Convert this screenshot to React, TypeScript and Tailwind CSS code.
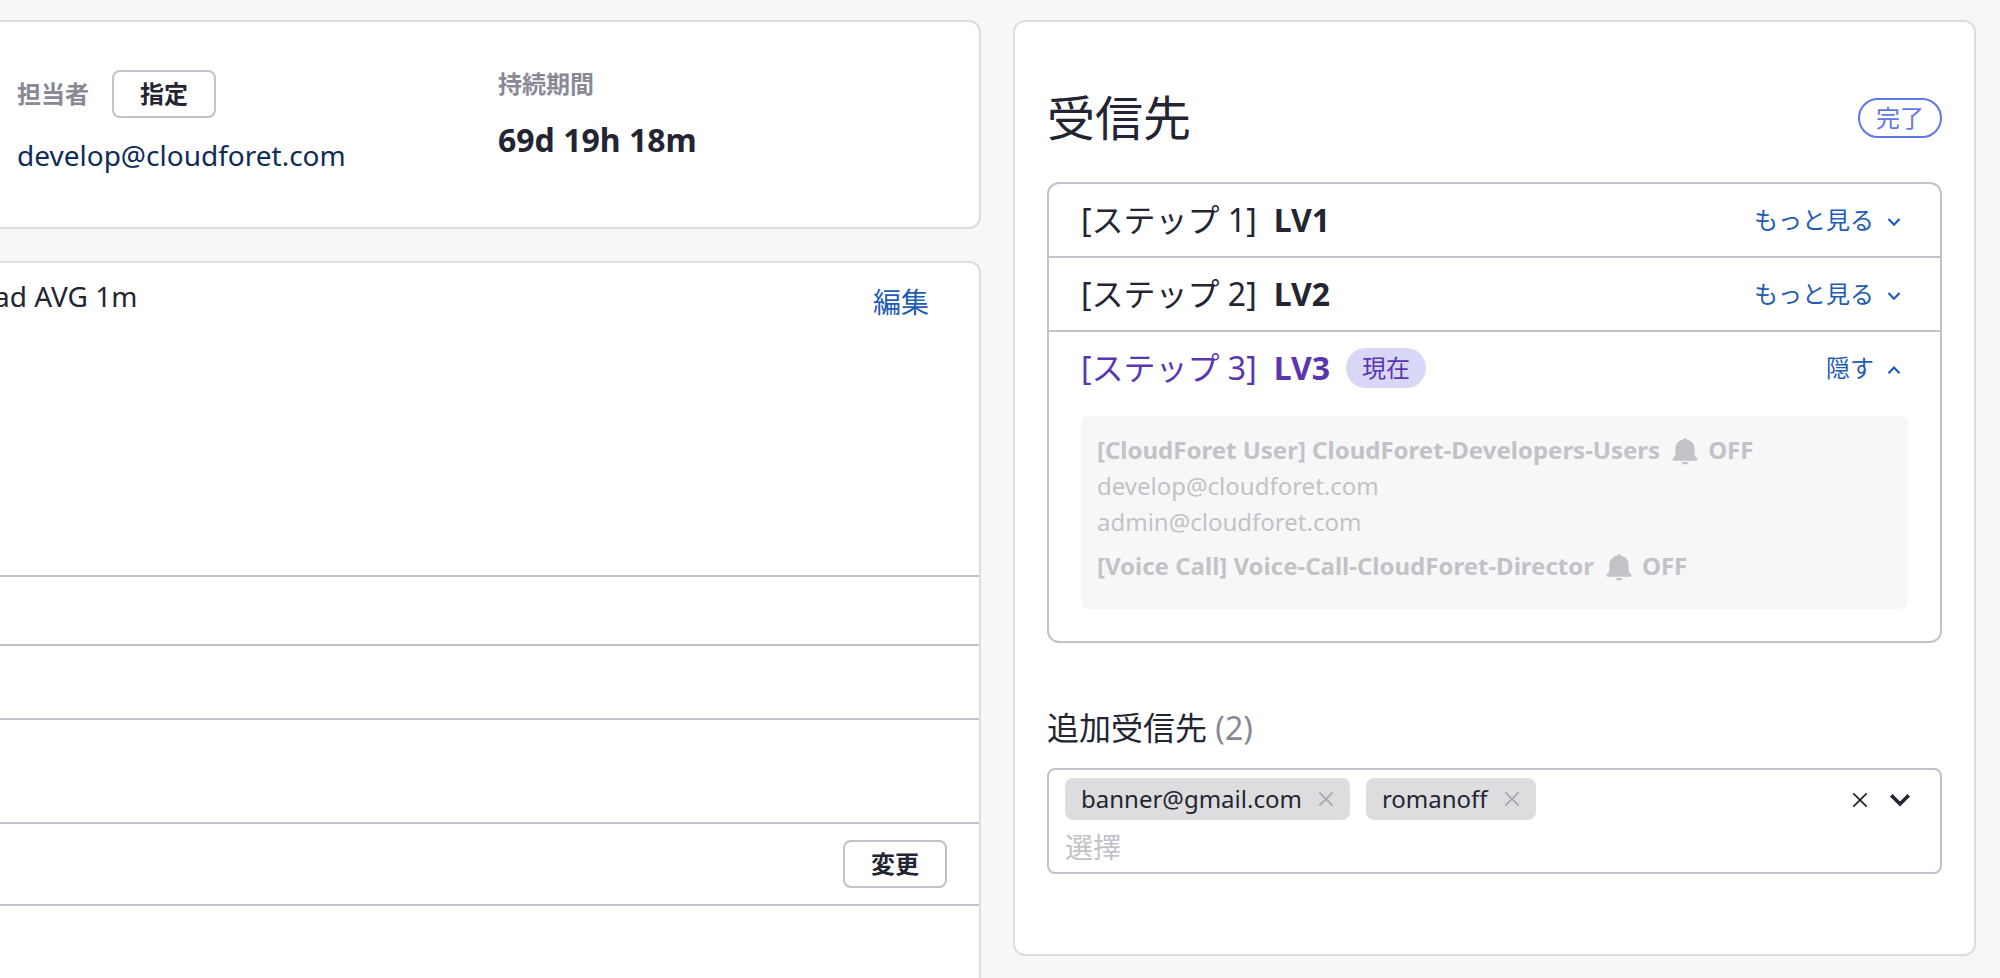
import { useState } from "react";

function Chevron({ up = false }: { up?: boolean }) {
  return (
    <svg viewBox="0 0 24 24" className="size-6" fill="none" stroke="currentColor" strokeWidth="2.2" aria-hidden="true">
      <path d={up ? "M6.5 17.200 12 11.500l5.500 5.700" : "M6.500 11l5.500 5.700 5.500-5.700"} />
    </svg>
  );
}

function Bell() {
  return (
    <svg viewBox="0 0 26 28" className="mt-0.5 mr-2.5 ml-3 h-7 w-[26px]" fill="currentColor" aria-hidden="true">
      <path d="M13 1.300c-1.300 0-1.900.7-2.200 1.500C6.400 3.600 3.400 7.100 3.400 11.600v7L.9 21.300c-.9 1.300-.4 2.400 1.100 2.400h22c1.500 0 2-1.100 1.100-2.400L22.600 18.600v-7c0-4.500-3-8-7.400-8.800C14.900 2 14.300 1.300 13 1.300zM9.300 25h7.400c-.6 1.600-2 2.400-3.700 2.400S9.900 26.600 9.300 25z" />
    </svg>
  );
}

function Cross() {
  return (
    <svg viewBox="0 0 16 16" className="size-4" fill="none" stroke="currentColor" strokeWidth="1.8" aria-hidden="true">
      <path d="M1.300 1.300l13.400 13.400M14.700 1.300L1.300 14.700" />
    </svg>
  );
}

function OutlineButton({ children }: { children: string }) {
  return (
    <button type="button" className="flex h-12 w-26 items-center justify-center rounded-lg border-2 border-[#c2c2c8] bg-white text-2xl font-bold">
      {children}
    </button>
  );
}

function StepHeader({ step, current = false }: { step: number; current?: boolean }) {
  return (
    <div className="flex h-18 items-center justify-between px-8">
      <h3 className={current ? "flex items-center text-[32px] text-[#5a37b0]" : "flex items-center text-[32px]"}>
        <span>[ステップ {step}]</span>
        <strong className="ml-[17px] font-bold">LV{step}</strong>
        {current && <span className="ml-4 flex h-10 items-center rounded-full bg-[#d9d7f7] px-4 text-2xl">現在</span>}
      </h3>
      <button type="button" aria-expanded={current} className="flex items-center gap-2 text-2xl text-[#1f5cb3]">
        {current ? "隠す" : "もっと見る"}
        <span className="pr-0.5">
          <Chevron up={current} />
        </span>
      </button>
    </div>
  );
}

function Channel({ name, members = [] }: { name: string; members?: string[] }) {
  return (
    <section className="mb-2">
      <h4 className="flex items-center font-bold">
        {name}
        <Bell />
        OFF
      </h4>
      {members.map((member) => (
        <p key={member}>{member}</p>
      ))}
    </section>
  );
}

export default function App() {
  const [tags, setTags] = useState(["banner@gmail.com", "romanoff"]);

  return (
    <main
      lang="ja"
      className="grid min-h-screen grid-cols-[981fr_963fr] gap-8 bg-[#f7f7f7] pt-5 pr-6 font-['Noto_Sans','Noto_Sans_CJK_JP',sans-serif] text-[#232533]"
    >
      <div className="flex min-w-0 flex-col gap-8">
        <section className="grid grid-cols-2 rounded-r-xl border-2 border-l-0 border-[#dddddf] bg-white pt-12 pb-[52px] pl-[17px]">
          <div>
            <div className="flex items-center gap-[23px]">
              <h2 className="text-2xl font-bold text-[#898995]">担当者</h2>
              <OutlineButton>指定</OutlineButton>
            </div>
            <p className="mt-[17px] text-[28px] leading-10 text-[#0f2c59]">develop@cloudforet.com</p>
          </div>
          <div>
            <h2 className="text-2xl leading-7 font-bold text-[#898995]">持続期間</h2>
            <p className="mt-[18px] text-[32px] leading-12 font-bold">69d 19h 18m</p>
          </div>
        </section>

        <section className="grow rounded-tr-xl border-t-2 border-r-2 border-[#dddddf] bg-white">
          <div className="flex h-78 items-start justify-between pt-[11px] pr-[50px] text-[28px] leading-11">
            <p className="-ml-1.5">ad AVG 1m</p>
            <a href="#edit" className="mt-1.5 text-[#1f5cb3]">
              編集
            </a>
          </div>
          <div className="h-[69px] border-t-2 border-[#c2c2c8]" />
          <div className="h-[74px] border-t-2 border-[#c2c2c8]" />
          <div className="h-26 border-t-2 border-[#c2c2c8]" />
          <div className="flex justify-end border-y-2 border-[#c2c2c8] py-4 pr-8">
            <OutlineButton>変更</OutlineButton>
          </div>
        </section>
      </div>

      <section className="min-w-0 self-start rounded-xl border-2 border-[#dddddf] bg-white px-8 pt-16 pb-20">
        <div className="flex h-16 items-center justify-between">
          <h1 className="text-5xl">受信先</h1>
          <span className="flex h-10 items-center rounded-full border-2 border-[#6078e5] px-4 text-2xl text-[#6078e5]">完了</span>
        </div>

        <ol className="mt-8 divide-y-2 divide-[#c2c2c8] rounded-xl border-2 border-[#c2c2c8]">
          <li>
            <StepHeader step={1} />
          </li>
          <li>
            <StepHeader step={2} />
          </li>
          <li>
            <StepHeader step={3} current />
            <div className="px-8 pt-3 pb-8">
              <div className="rounded-lg bg-[#f7f7f7] px-4 pt-4 pb-[17px] text-2xl leading-9 text-[#c2c2c8]">
                <Channel
                  name="[CloudForet User] CloudForet-Developers-Users"
                  members={["develop@cloudforet.com", "admin@cloudforet.com"]}
                />
                <Channel name="[Voice Call] Voice-Call-CloudForet-Director" />
              </div>
            </div>
          </li>
        </ol>

        <h2 className="mt-[61px] text-[32px] leading-12">
          <label htmlFor="recipients">追加受信先</label> <span className="text-[#898995]">({tags.length})</span>
        </h2>
        <div className="mt-4 flex items-start justify-between rounded-lg border-2 border-[#c2c2c8] pt-2 pr-[30px] pb-0.5 pl-4">
          <div className="min-w-0 grow">
            <ul className="flex flex-wrap gap-4">
              {tags.map((tag) => (
                <li key={tag} className="flex h-[42px] items-center gap-4 rounded-lg bg-[#dddddf] px-4 text-2xl">
                  {tag}
                  <button
                    type="button"
                    aria-label={`${tag} 削除`}
                    className="text-[#a9a9b2]"
                    onClick={() => setTags(tags.filter((t) => t !== tag))}
                  >
                    <Cross />
                  </button>
                </li>
              ))}
            </ul>
            <input
              id="recipients"
              type="text"
              placeholder="選擇"
              className="mt-1 block h-[46px] w-full text-[28px] outline-none placeholder:text-[#c2c2c8]"
            />
          </div>
          <div className="flex h-11 items-center gap-[22px]">
            <button type="button" aria-label="クリア" onClick={() => setTags([])}>
              <Cross />
            </button>
            <button type="button" aria-label="開く">
              <svg viewBox="0 0 20 16" className="h-4 w-5" fill="none" stroke="currentColor" strokeWidth="3.600" aria-hidden="true">
                <path d="M1.200 3.200L10 12l8.800-8.800" />
              </svg>
            </button>
          </div>
        </div>
      </section>
    </main>
  );
}
